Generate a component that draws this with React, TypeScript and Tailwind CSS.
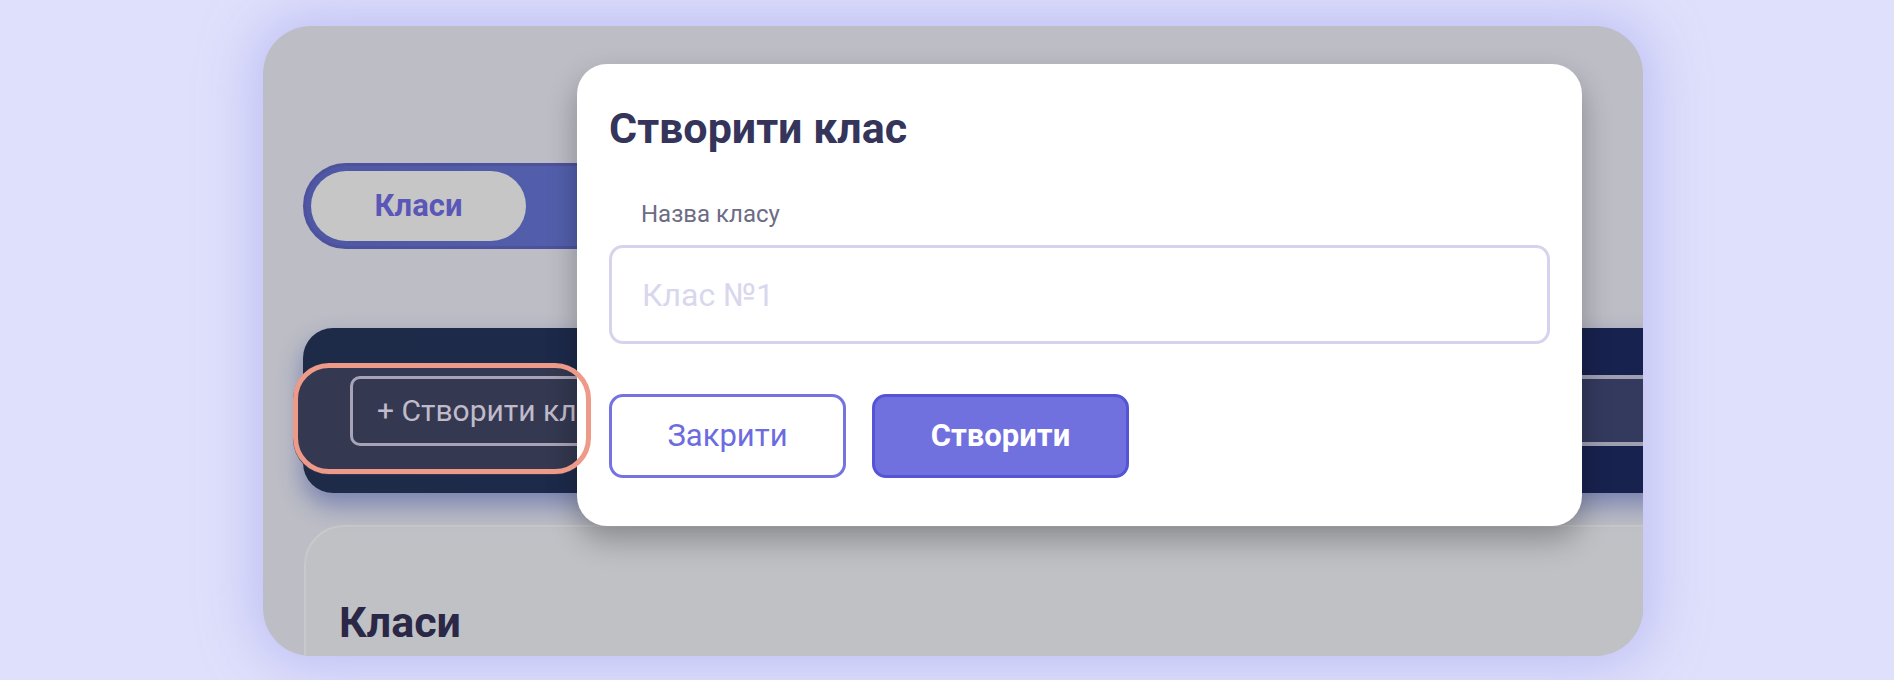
import React from 'react';

const font = "font-['Roboto','Liberation_Sans',sans-serif]";

function TabSwitch() {
  return (
    <div className="flex h-[86px] w-[560px] items-center rounded-full border-[3px] border-[#4e519c] bg-gradient-to-r from-[#4f57a4] to-[#5668b4] px-[5px]">
      <div className="flex h-[70px] w-[215px] items-center justify-center rounded-full bg-[#c6c6c6]">
        <span className="text-[31px] font-bold text-[#5b57b8]">Класи</span>
      </div>
    </div>
  );
}

function ActionBar() {
  return (
    <div className="relative flex h-[165px] w-[1420px] items-center justify-between rounded-l-[30px] bg-gradient-to-r from-[#1e2b48] to-[#17214f] pl-[47px] shadow-[0_12px_24px_rgba(40,60,150,0.45)]">
      {/* spotlight cut-out behind the highlighted button */}
      <div className="absolute left-[-10px] top-[36px] h-[111px] w-[298px] rounded-[36px] bg-[#343850]" />
      <button className="relative flex h-[70px] items-center rounded-[10px] border-[3px] border-[#a9a3b8] pl-[24px] pr-[25px] text-[30px] text-[#c0bbcb]">
        + Створити клас
      </button>
      <div className="mr-[40px] h-[71px] w-[380px] border-y-[4px] border-[#9ea0b2] bg-[#333a5e]" />
    </div>
  );
}

function CreateClassModal() {
  return (
    <div className="absolute left-[314px] top-[38px] z-20 w-[1005px] rounded-[30px] bg-white px-[32px] pb-[48px] pt-[43px] shadow-[0_14px_30px_rgba(0,0,0,0.28)]">
      <h2 className="text-[43px] font-bold leading-none text-[#35345a]">Створити клас</h2>
      <label className="ml-[32px] mt-[52px] block text-[24px] leading-none text-[#6d6c85]">Назва класу</label>
      <div className="mt-[19px] flex h-[99px] items-center rounded-[14px] border-[3px] border-[#d6d4ec] px-[30px]">
        <span className="text-[32px] text-[#d8d7ee]">Клас №1</span>
      </div>
      <div className="mt-[50px] flex gap-[26px]">
        <button className="flex h-[84px] w-[237px] items-center justify-center rounded-[14px] border-[3px] border-[#7473e0] bg-white text-[31px] text-[#6c6be0]">
          Закрити
        </button>
        <button className="flex h-[84px] w-[257px] items-center justify-center rounded-[14px] border-[3px] border-[#5553d6] bg-[#7170df] text-[31px] font-bold text-white">
          Створити
        </button>
      </div>
    </div>
  );
}

export default function App() {
  return (
    <div className={`${font} min-h-[680px] w-full bg-[#dfe0fb] pl-[263px] pt-[26px]`}>
      <div className="relative h-[630px] w-[1380px] rounded-[48px] bg-[#bcbdc5] shadow-[0_0_50px_12px_rgba(170,170,240,0.55)]">
        <div className="h-full overflow-hidden rounded-[48px]">
          <div className="flex flex-col pl-[40px] pt-[137px]">
            <TabSwitch />
            <div className="mt-[79px]">
              <ActionBar />
            </div>
            <div className="ml-[1px] mt-[32px] h-[160px] w-[1420px] rounded-tl-[40px] border-[2px] border-[#c8c9cb] bg-[#c0c1c5] pl-[33px] pt-[74px]">
              <h3 className="text-[43px] font-bold leading-none text-[#2a2846]">Класи</h3>
            </div>
          </div>
        </div>
        <CreateClassModal />
        {/* onboarding highlight ring */}
        <div className="absolute left-[30px] top-[337px] z-30 h-[111px] w-[298px] rounded-[36px] border-[5px] border-[#ee9a88]" />
      </div>
    </div>
  );
}
